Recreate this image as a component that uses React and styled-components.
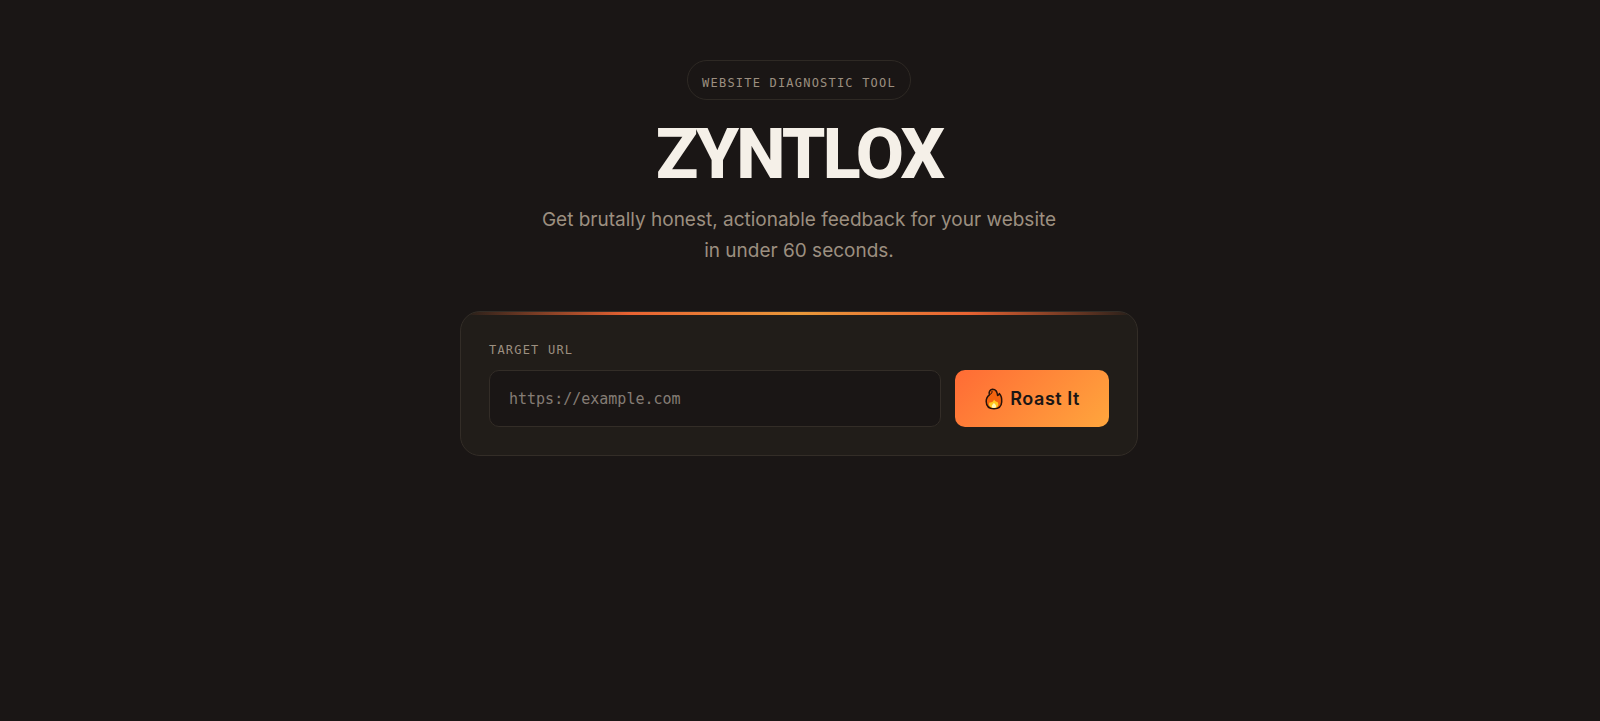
import React from 'react';
import styled, { createGlobalStyle } from 'styled-components';

const GlobalStyle = createGlobalStyle`
  * {
    box-sizing: border-box;
  }

  body {
    margin: 0;
    background: #1a1615;
    color: #f5f0e8;
    font-family: Inter, sans-serif;
  }
`;

const Page = styled.main`
  display: flex;
  flex-direction: column;
  align-items: center;
  min-height: 100vh;
  padding: 60px 26px 60px 24px;
`;

const Header = styled.header`
  display: flex;
  flex-direction: column;
  align-items: center;
  text-align: center;
  margin-bottom: 45px;
`;

const Badge = styled.span`
  padding: 13px 14px 7px;
  border: 1px solid #2e2924;
  border-radius: 20px;
  color: #9c8f80;
  font-family: 'DejaVu Sans Mono', monospace;
  font-size: 12px;
  line-height: 18px;
  letter-spacing: 0.1em;
  text-transform: uppercase;
`;

const Title = styled.h1`
  margin: 18px 0 14px;
  font-family: Roboto, sans-serif;
  font-size: 70px;
  font-weight: 800;
  line-height: 72px;
  letter-spacing: -0.04em;
`;

const Subtitle = styled.p`
  max-width: 520px;
  margin: 0;
  color: #9c8f80;
  font-size: 19px;
  line-height: 31px;
`;

const Card = styled.form`
  position: relative;
  width: 100%;
  max-width: 678px;
  padding: 29px 28px 28px;
  border: 1px solid #332d27;
  border-radius: 20px;
  background: #211d19;
  overflow: hidden;

  &::before {
    content: '';
    position: absolute;
    top: 0;
    left: 0;
    right: 0;
    height: 3px;
    background: linear-gradient(90deg, transparent, #ff6b35, #ffa63d, #ff6b35, transparent);
    opacity: 0.9;
  }
`;

const Label = styled.label`
  display: block;
  margin-bottom: 11px;
  color: #9c8f80;
  font-family: 'DejaVu Sans Mono', monospace;
  font-size: 12px;
  line-height: 18px;
  letter-spacing: 0.1em;
  text-transform: uppercase;
`;

const InputRow = styled.div`
  display: flex;
  gap: 14px;
`;

const UrlInput = styled.input`
  flex: 1;
  min-width: 0;
  height: 57px;
  padding: 0 19px;
  border: 1px solid #332d27;
  border-radius: 10px;
  background: #1a1615;
  color: #f5f0e8;
  font-family: 'DejaVu Sans Mono', monospace;
  font-size: 15px;
  outline: none;

  &::placeholder {
    color: #857d75;
    opacity: 1;
  }
`;

const RoastButton = styled.button`
  display: flex;
  align-items: center;
  gap: 7px;
  height: 57px;
  padding: 0 29px 0 30px;
  border: 0;
  border-radius: 10px;
  background: linear-gradient(135deg, #ff6b35, #ffa63d);
  color: #1a1615;
  font-family: Inter, sans-serif;
  font-size: 18px;
  font-weight: 600;
  letter-spacing: 0.03em;
  cursor: pointer;
`;

const FlameIcon = () => (
  <svg width="18" height="22" viewBox="0 0 18 22" aria-hidden="true">
    <path
      d="M7.500 1.200C10.500 1.200 12.300 3.500 12.600 7.500C13.600 7.200 14.200 6.500 14.300 5.500C16.300 7.500 16.900 11 16.700 14C16.400 18.500 13.500 20.800 9 20.800C4.500 20.800 1.300 18.300 1.200 13.500C1.100 10.500 2.300 8.500 4.400 6.800C3.500 4 4.800 1.800 7.500 1.200Z"
      fill="#f4640f"
      stroke="#26120a"
      strokeWidth="1.500"
      strokeLinejoin="round"
    />
    <path d="M4.800 6.500C6.500 6 7.300 4.500 7 3" fill="none" stroke="#26120a" />
    <path
      d="M9 11.500C10 13 11 14 12.500 14C14.500 17 12.500 20 9 20C5.500 20 3 17.500 4.500 14.500C6.500 15 8.500 13.500 9 11.500Z"
      fill="#ffc81f"
    />
    <path d="M9 15C11 16.500 12.500 20 9 20C5.500 20 6.500 17 9 15Z" fill="#fff8b8" />
  </svg>
);

const App = () => {
  return (
    <>
      <GlobalStyle />
      <Page>
        <Header>
          <Badge>Website Diagnostic Tool</Badge>
          <Title>ZYNTLOX</Title>
          <Subtitle>
            Get brutally honest, actionable feedback for your website in under 60 seconds.
          </Subtitle>
        </Header>

        <Card onSubmit={event => event.preventDefault()}>
          <Label htmlFor="target-url">Target URL</Label>
          <InputRow>
            <UrlInput id="target-url" type="url" placeholder="https://example.com" />
            <RoastButton type="submit">
              <FlameIcon />
              Roast It
            </RoastButton>
          </InputRow>
        </Card>
      </Page>
    </>
  );
};

export default App;
